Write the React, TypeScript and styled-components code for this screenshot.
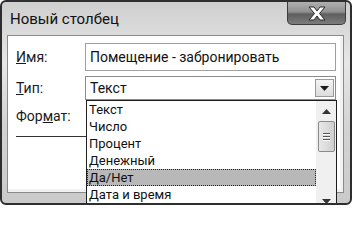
import React, { useState } from 'react';
import styled, { createGlobalStyle } from 'styled-components';

const FONT = 'Roboto, "Liberation Sans", sans-serif';

const TYPES = ['Текст', 'Число', 'Процент', 'Денежный', 'Да/Нет', 'Дата и время'];

const GlobalStyle = createGlobalStyle`
  html, body {
    margin: 0;
    padding: 0;
    background: #ffffff;
  }
`;

const App: React.FC = () => {
  const [name] = useState('Помещение - забронировать');
  const [selected] = useState('Да/Нет');

  return (
    <>
      <GlobalStyle />
      <SWindow>
        <STitleBar>
          <STitle>Новый столбец</STitle>
          <SCloseButton>
            <svg width="26" height="17" viewBox="0 0 26 17">
              <path
                d="M5 2 L10 2 L13 6 L16 2 L21 2 L15.5 8.5 L21 15 L16 15 L13 11 L10 15 L5 15 L10.5 8.5 Z"
                fill="#ffffff"
                stroke="#2a2a2a"
                strokeWidth="1"
                strokeLinejoin="round"
              />
            </svg>
          </SCloseButton>
        </STitleBar>
        <SPanel>
          <SRow>
            <SLabel>
              <u>И</u>мя:
            </SLabel>
            <SInput>{name}</SInput>
          </SRow>
          <SRow>
            <SLabel>
              <u>Т</u>ип:
            </SLabel>
            <SSelect>
              <span>Текст</span>
              <SSelectButton>
                <svg width="9" height="5" viewBox="0 0 9 5">
                  <path d="M0 0 L9 0 L4.5 5 Z" fill="#1a1a1a" />
                </svg>
              </SSelectButton>
            </SSelect>
          </SRow>
          <SFormatRow>
            <SLabel>
              Фор<u>м</u>ат:
            </SLabel>
          </SFormatRow>
          <SSeparator />
        </SPanel>

        <SDropdown>
          <SList>
            {TYPES.map((type) => (
              <SItem key={type} $active={type === selected}>
                {type}
              </SItem>
            ))}
          </SList>
          <SScrollbar>
            <SArrow>
              <svg width="9" height="5" viewBox="0 0 9 5">
                <path d="M0 5 L9 5 L4.5 0 Z" fill="#333333" />
              </svg>
            </SArrow>
            <SThumb>
              <SGrip />
              <SGrip />
              <SGrip />
            </SThumb>
            <STrack />
            <SArrow>
              <svg width="9" height="5" viewBox="0 0 9 5">
                <path d="M0 0 L9 0 L4.5 5 Z" fill="#333333" />
              </svg>
            </SArrow>
          </SScrollbar>
        </SDropdown>
      </SWindow>
    </>
  );
};

const SWindow = styled.div`
  position: relative;
  display: flex;
  flex-direction: column;

  width: 352px;
  height: 205px;
  box-sizing: border-box;
  overflow: hidden;
  border: 2px solid #2e2e2e;
  border-radius: 6px;
  background: linear-gradient(180deg, #cfcfcf 0%, #e6e6e6 30%, #d4d4d4 60%, #cacaca 100%);
  font-family: ${FONT};
  color: #111111;
`;

const STitleBar = styled.div`
  display: flex;
  align-items: flex-start;
  justify-content: space-between;

  height: 33px;
  padding-left: 8px;
  padding-right: 4px;
`;

const STitle = styled.div`
  padding-top: 8px;
  font-size: 15px;
  color: #111111;
`;

const SCloseButton = styled.div`
  display: flex;
  align-items: center;
  justify-content: center;

  width: 59px;
  height: 23px;
  box-sizing: border-box;
  border: 1px solid #3c3c3c;
  border-top: none;
  border-radius: 0 0 5px 5px;
  background: linear-gradient(180deg, #b0b0b0 0%, #909090 45%, #5e5e5e 55%, #7c7c7c 100%);
`;

const SPanel = styled.div`
  display: flex;
  flex-direction: column;
  gap: 5px;

  height: 158px;
  margin: 0 6px 0 5px;
  padding: 7px 7px 0 8px;
  box-sizing: border-box;
  border: 1px solid #8a8a8a;
  background: #ffffff;
  box-shadow: inset -3px -3px 0 #f2f2f2;
`;

const SRow = styled.div`
  display: flex;
  align-items: center;
`;

const SFormatRow = styled.div`
  display: flex;
  align-items: center;
  height: 22px;
`;

const SLabel = styled.div`
  width: 69px;
  flex-shrink: 0;
  font-size: 14px;
  color: #1a1a1a;
`;

const SInput = styled.div`
  display: flex;
  align-items: center;

  flex: 1;
  height: 28px;
  padding-left: 4px;
  box-sizing: border-box;
  border: 1px solid #a0a0a0;
  font-size: 14px;
`;

const SSelect = styled.div`
  display: flex;
  align-items: center;
  justify-content: space-between;

  flex: 1;
  height: 24px;
  padding-left: 4px;
  padding-right: 1px;
  box-sizing: border-box;
  border: 1px solid #8c8c8c;
  font-size: 14px;
`;

const SSelectButton = styled.div`
  display: flex;
  align-items: center;
  justify-content: center;

  width: 19px;
  height: 18px;
  box-sizing: border-box;
  border: 1px solid #9a9a9a;
  background: linear-gradient(180deg, #f4f4f4 0%, #dcdcdc 100%);
`;

const SSeparator = styled.div`
  width: 72px;
  height: 1px;
  margin-top: 4px;
  background: #333333;
`;

const SDropdown = styled.div`
  position: absolute;
  top: 98px;
  left: 84px;
  display: flex;

  width: 251px;
  height: 112px;
  box-sizing: border-box;
  border: 1px solid #1e1e1e;
  background: #ffffff;
`;

const SList = styled.div`
  display: flex;
  flex-direction: column;
  flex: 1;
`;

const SItem = styled.div<{ $active?: boolean }>`
  height: 17px;
  padding-left: 1px;
  box-sizing: border-box;
  line-height: 15px;
  font-size: 13px;
  color: #111111;
  border: 1px dotted ${({ $active }) => ($active ? '#222222' : 'transparent')};
  background: ${({ $active }) => ($active ? '#b8b8b8' : 'transparent')};
`;

const SScrollbar = styled.div`
  display: flex;
  flex-direction: column;
  align-items: center;

  width: 20px;
  background: #f0f0f0;
`;

const SArrow = styled.div`
  display: flex;
  align-items: center;
  justify-content: center;
  width: 100%;
  height: 20px;
`;

const SThumb = styled.div`
  display: flex;
  flex-direction: column;
  align-items: center;
  justify-content: center;
  gap: 2px;

  width: 17px;
  height: 31px;
  box-sizing: border-box;
  border: 1px solid #8a8a8a;
  border-radius: 2px;
  background: linear-gradient(90deg, #e8e8e8 0%, #d0d0d0 100%);
`;

const SGrip = styled.div`
  width: 7px;
  height: 1px;
  background: #555555;
  box-shadow: 0 1px 0 #ffffff;
`;

const STrack = styled.div`
  flex: 1;
`;

export default App;
